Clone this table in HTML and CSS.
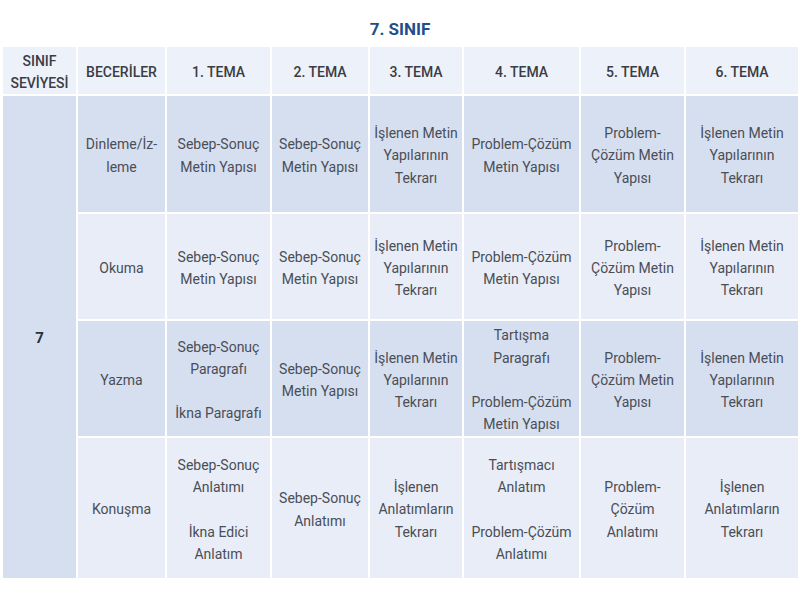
FILE: index.html
```html
<!DOCTYPE html>
<html lang="tr">
<head>
<meta charset="utf-8">
<title>7. SINIF</title>
<link rel="stylesheet" href="styles.css">
</head>
<body>
<h1 class="title">7. SINIF</h1>
<table class="grid">
  <colgroup>
    <col class="c1"><col class="c2"><col class="c3"><col class="c4"><col class="c5"><col class="c6"><col class="c7"><col class="c8">
  </colgroup>
  <thead>
    <tr class="head">
      <th>SINIF<br>SEVİYESİ</th>
      <th>BECERİLER</th>
      <th>1. TEMA</th>
      <th>2. TEMA</th>
      <th>3. TEMA</th>
      <th>4. TEMA</th>
      <th>5. TEMA</th>
      <th>6. TEMA</th>
    </tr>
  </thead>
  <tbody>
    <tr class="r1 dark">
      <td class="level" rowspan="4">7</td>
      <td>Dinleme/İz-<br>leme</td>
      <td>Sebep-Sonuç<br>Metin Yapısı</td>
      <td>Sebep-Sonuç<br>Metin Yapısı</td>
      <td>İşlenen Metin<br>Yapılarının<br>Tekrarı</td>
      <td>Problem-Çözüm<br>Metin Yapısı</td>
      <td>Problem-<br>Çözüm Metin<br>Yapısı</td>
      <td>İşlenen Metin<br>Yapılarının<br>Tekrarı</td>
    </tr>
    <tr class="r2 light">
      <td>Okuma</td>
      <td>Sebep-Sonuç<br>Metin Yapısı</td>
      <td>Sebep-Sonuç<br>Metin Yapısı</td>
      <td>İşlenen Metin<br>Yapılarının<br>Tekrarı</td>
      <td>Problem-Çözüm<br>Metin Yapısı</td>
      <td>Problem-<br>Çözüm Metin<br>Yapısı</td>
      <td>İşlenen Metin<br>Yapılarının<br>Tekrarı</td>
    </tr>
    <tr class="r3 dark">
      <td>Yazma</td>
      <td>Sebep-Sonuç<br>Paragrafı<br><br>İkna Paragrafı</td>
      <td>Sebep-Sonuç<br>Metin Yapısı</td>
      <td>İşlenen Metin<br>Yapılarının<br>Tekrarı</td>
      <td>Tartışma<br>Paragrafı<br><br>Problem-Çözüm<br>Metin Yapısı</td>
      <td>Problem-<br>Çözüm Metin<br>Yapısı</td>
      <td>İşlenen Metin<br>Yapılarının<br>Tekrarı</td>
    </tr>
    <tr class="r4 light">
      <td>Konuşma</td>
      <td>Sebep-Sonuç<br>Anlatımı<br><br>İkna Edici<br>Anlatım</td>
      <td>Sebep-Sonuç<br>Anlatımı</td>
      <td>İşlenen<br>Anlatımların<br>Tekrarı</td>
      <td>Tartışmacı<br>Anlatım<br><br>Problem-Çözüm<br>Anlatımı</td>
      <td>Problem-<br>Çözüm<br>Anlatımı</td>
      <td>İşlenen<br>Anlatımların<br>Tekrarı</td>
    </tr>
  </tbody>
</table>
</body>
</html>
```
FILE: styles.css
```css
html, body {
  margin: 0;
  padding: 0;
  background: #ffffff;
}
body {
  font-family: Roboto, "Liberation Sans", sans-serif;
  color: #4a4e56;
}
.title {
  margin: 0;
  padding-top: 19px;
  height: 26px;
  text-align: center;
  font-size: 17px;
  font-weight: 700;
  line-height: 20px;
  color: #1f4e8c;
}
.grid {
  margin-left: 1px;
  border-collapse: separate;
  border-spacing: 2px;
  table-layout: fixed;
  width: 799px;
}
.c1 { width: 73px; }
.c2 { width: 87px; }
.c3 { width: 103px; }
.c4 { width: 96px; }
.c5 { width: 92px; }
.c6 { width: 115px; }
.c7 { width: 103px; }
.c8 { width: 112px; }
.grid th,
.grid td {
  padding: 3px 2px 0;
  text-align: center;
  vertical-align: middle;
  font-size: 14px;
  line-height: 22.25px;
}
.grid th {
  background: #edf1f9;
  font-weight: 500;
  color: #3a3d44;
  line-height: 22px;
  height: 44px;
}
.dark td { background: #d6dff0; }
.light td { background: #e8edf8; }
.grid td.level {
  background: #d6dff0;
  font-weight: 700;
  font-size: 15px;
  color: #2c3039;
}
.r1 td { height: 113px; }
.r2 td { height: 102px; }
.r3 td { height: 112px; }
.r4 td { height: 137px; }
```
